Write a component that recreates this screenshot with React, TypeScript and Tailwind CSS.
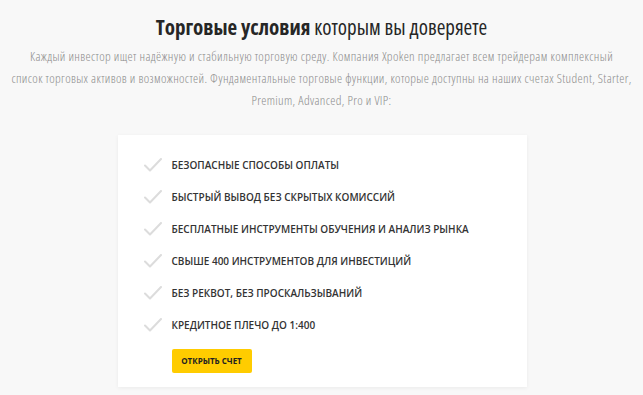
const features = [
  "Безопасные способы оплаты",
  "Быстрый вывод без скрытых комиссий",
  "Бесплатные инструменты обучения и анализ рынка",
  "Свыше 400 инструментов для инвестиций",
  "Без реквот, без проскальзываний",
  "Кредитное плечо до 1:400",
];

function Check() {
  return (
    <svg width="18" height="14" viewBox="0 0 18 14" className="shrink-0">
      <path d="M1 7.5 L6 12.5 L17 1" fill="none" stroke="#dcdcdc" strokeWidth="2" strokeLinecap="round" strokeLinejoin="round" />
    </svg>
  );
}

export default function App() {
  return (
    <div className="min-h-[395px] w-full bg-[#f8f8f8] font-['Open_Sans',sans-serif] text-[#222]">
      <div className="flex flex-col items-center pt-[13px]">
        <h2 className="text-[21px] leading-[28px] text-[#262626] [font-stretch:75%]">
          <span className="font-bold">Торговые условия</span> которым вы доверяете
        </h2>
        <p className="mt-[4px] whitespace-nowrap text-center text-[13px] font-light leading-[22px] tracking-[0.35px] text-[#8c8c8c] [font-stretch:75%]">
          Каждый инвестор ищет надёжную и стабильную торговую среду. Компания Xpoken предлагает всем трейдерам комплексный
          <br />
          список торговых активов и возможностей. Фундаментальные торговые функции, которые доступны на наших счетах Student, Starter,
          <br />
          Premium, Advanced, Pro и VIP:
        </p>
        <div className="mt-[24px] ml-[1px] w-[409px] h-[252px] bg-white shadow-[0_1px_4px_rgba(0,0,0,0.06)] pl-[26px] pt-[21px]">
          <ul className="flex flex-col gap-[14px]">
            {features.map((f) => (
              <li key={f} className="flex h-[18px] items-center gap-[10px]">
                <Check />
                <span className="text-[10px] font-semibold uppercase text-[#333]">{f}</span>
              </li>
            ))}
          </ul>
          <button className="mt-[15px] ml-[28px] h-[24px] w-[80px] rounded-[2px] bg-[#ffcc00] text-[8px] font-bold uppercase text-[#222]">
            Открыть счет
          </button>
        </div>
      </div>
    </div>
  );
}
